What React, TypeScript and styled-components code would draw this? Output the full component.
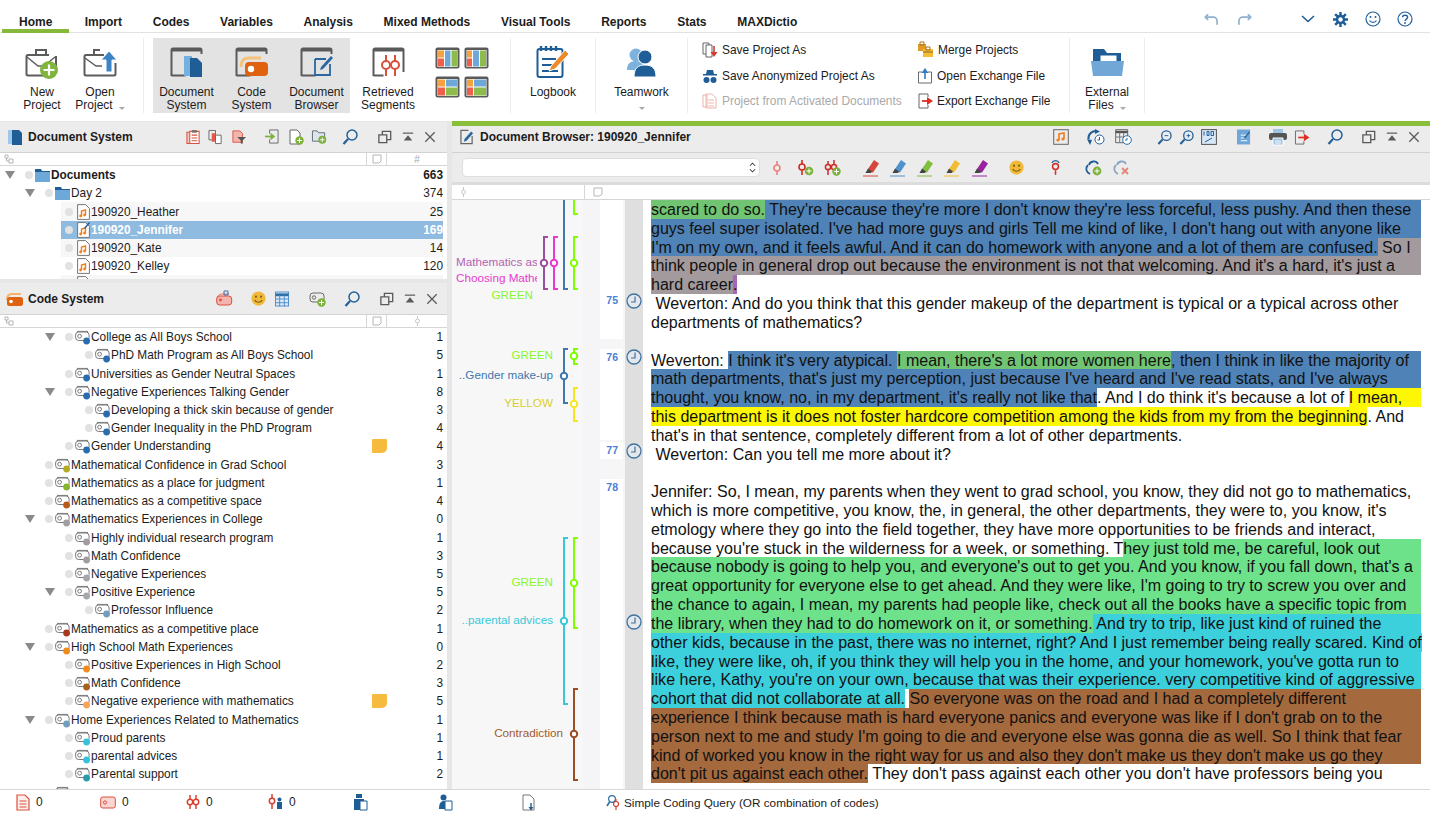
import React from 'react';
import styled, { createGlobalStyle } from 'styled-components';

const UI_FONT = `"Liberation Sans", Arial, sans-serif`;

const Global = createGlobalStyle`
  html, body { margin: 0; padding: 0; background: #fff; }
  #root { width: 1430px; height: 814px; overflow: hidden; }
`;

const Page = styled.div`
  width: 1430px; height: 814px; display: flex; flex-direction: column; overflow: hidden;
  background: #fff; color: #1c1c1c; font-family: ${UI_FONT}; font-size: 12px;
`;

/* ---------- tabs ---------- */
const TabBar = styled.div`
  height: 33px; flex: none; display: flex; align-items: stretch; padding-left: 2px;
  border-bottom: 1px solid #e2e2e2; box-sizing: border-box;
`;
const Tab = styled.div<{ $active?: boolean }>`
  padding: 15px 15.35px 0; box-sizing: border-box; height: 33px; font-weight: 700; font-size: 12px; letter-spacing: 0;
  border-bottom: 4px solid ${p => (p.$active ? '#86b93a' : 'transparent')};
  &:first-child { padding-left: 17px; padding-right: 17px; }
`;
const TabRight = styled.div`
  margin-left: auto; display: flex; align-items: center; padding: 6px 17px 0 0;
`;

/* ---------- ribbon ---------- */
const Ribbon = styled.div`height: 88px; flex: none; display: flex; align-items: flex-start; background: #fff;`;
const RibbonButton = styled.div<{ $w: number; $top?: number; $ih?: number; $ml?: number }>`
  width: ${p => p.$w}px; flex: none; box-sizing: border-box; padding-top: ${p => p.$top ?? 14}px; margin-left: ${p => p.$ml ?? 0}px;
  display: flex; flex-direction: column; align-items: center; text-align: center; line-height: 13px; font-size: 12px;
  & > div:first-child { height: ${p => p.$ih ?? 39}px; }
`;
const RibbonIcon = styled.div`display: flex; align-items: flex-start; justify-content: center;`;
const Separator = styled.div<{ $ml?: number }>`
  width: 1px; height: 75px; margin: 5px 0 0 ${p => p.$ml ?? 0}px; flex: none; background: #ececec;
`;
const ActiveGroup = styled.div`
  display: flex; flex: none; width: 197px; height: 75px; margin: 5px 0 0 9px; padding-left: 1px; box-sizing: border-box; background: #e3e3e3;
`;
const LayoutGrid = styled.div`
  display: grid; flex: none; grid-template-columns: 25px 25px; grid-auto-rows: 22px; gap: 7px 4px; margin: 14px 0 0 9px;
`;
const ListColumn = styled.div<{ $w: number; $ml?: number }>`
  width: ${p => p.$w}px; margin: 4.5px 0 0 ${p => p.$ml ?? 0}px; flex: none; display: flex; flex-direction: column;
`;
const ListItem = styled.div<{ $off?: boolean }>`
  height: 25.5px; display: flex; align-items: center; gap: 4px; font-size: 11.95px; color: ${p => (p.$off ? '#a9a9a9' : '#1c1c1c')}; white-space: nowrap;
`;
const Caret = styled.span`
  display: inline-block; width: 0; height: 0; margin-left: 6px; vertical-align: -1px;
  border-left: 3px solid transparent; border-right: 3px solid transparent; border-top: 3px solid #aaa;
`;
const CaretLine = styled.div`height: 12px; line-height: 12px; margin-left: -6px;`;

/* ---------- workspace ---------- */
const Workspace = styled.div`flex: 1; min-height: 0; display: flex; background: #e6e6e6;`;
const LeftColumn = styled.div`width: 447px; flex: none; display: flex; flex-direction: column; padding-top: 1px; box-sizing: border-box;`;
const RightColumn = styled.div`
  margin-left: 5px; flex: 1; min-width: 0; display: flex; flex-direction: column; background: #fff; border-top: 5px solid #8abf3a;
`;
const Panel = styled.div<{ $h?: number }>`
  ${p => (p.$h ? `height:${p.$h}px; flex:none; margin-bottom: 4px;` : 'flex:1; min-height:0;')}
  display: flex; flex-direction: column; background: #fff; overflow: hidden;
`;
const PanelHeader = styled.div<{ $h: number; $pb?: number }>`
  height: ${p => p.$h}px; padding-bottom: ${p => p.$pb ?? 0}px; flex: none; display: flex; align-items: center; background: #ececec; box-sizing: border-box;
  border-bottom: 1px solid #d2d2d2;
`;
const PanelTitle = styled.div<{ $ml: number; $w: number }>`
  margin-left: ${p => p.$ml}px; width: ${p => p.$w}px; flex: none; font-weight: 700; font-size: 12px; letter-spacing: 0; white-space: nowrap;
`;
const SubHeader = styled.div`
  height: 13px; flex: none; display: flex; align-items: center; box-sizing: border-box; border-bottom: 1px solid #d6d6d6; background: #fff;
`;
const SubCell = styled.div<{ $w: number; $line?: boolean }>`
  width: ${p => p.$w}px; flex: none; height: 100%; display: flex; align-items: center; justify-content: center;
  border-left: ${p => (p.$line ? '1px solid #d6d6d6' : 'none')}; box-sizing: border-box; color: #aaa; font-size: 10px;
`;
const TreeList = styled.div`flex: 1; min-height: 0; overflow: hidden;`;
const Row = styled.div`height: 18.22px; display: flex; align-items: center; font-size: 11.85px;`;
const Indent = styled.div<{ $lvl: number }>`
  width: ${p => 21 + p.$lvl * 20}px; padding-left: ${p => 5 + p.$lvl * 20}px; box-sizing: border-box; flex: none; display: flex; align-items: center;
`;
const Arrow = styled.span`
  width: 0; height: 0; border-left: 5px solid transparent; border-right: 5px solid transparent; border-top: 8px solid #8a8a8a;
`;
const RowBody = styled.div<{ $sel?: boolean; $stripe?: boolean }>`
  flex: 1; min-width: 0; height: 100%; margin-right: 4px; padding: 0 0 0 4px; display: flex; align-items: center; box-sizing: border-box;
  background: ${p => (p.$sel ? '#8fbbe0' : p.$stripe ? '#f7f7f7' : 'transparent')}; color: ${p => (p.$sel ? '#fff' : '#1c1c1c')};
  font-weight: ${p => (p.$sel ? 700 : 400)};
`;
const Dot = styled.span`width: 8px; height: 8px; border-radius: 50%; background: #e2e2e2; flex: none;`;
const RowLabel = styled.div<{ $bold?: boolean }>`
  flex: 1; min-width: 0; margin-left: 1px; white-space: nowrap; overflow: hidden; font-weight: ${p => (p.$bold ? 700 : 'inherit')};
`;
const NoteCell = styled.div`width: 15px; flex: none; display: flex; align-items: center;`;
const StickyNote = styled.span`
  width: 15px; height: 14px; border-radius: 1px 1px 5px 1px; background: #f6bb3e;
`;
const Count = styled.div<{ $bold?: boolean }>`
  width: 56px; flex: none; text-align: right; font-weight: ${p => (p.$bold ? 700 : 'inherit')};
`;

/* ---------- browser ---------- */
const BrowserTools = styled.div`
  height: 32px; flex: none; display: flex; align-items: center; background: #ececec; border-bottom: 3px solid #dcdcdc; box-sizing: border-box;
`;
const ComboBox = styled.div`
  width: 298px; height: 19px; margin-left: 10px; flex: none; background: #fff; border-radius: 4px; border: 1px solid #dedede; box-sizing: border-box;
  display: flex; align-items: center; justify-content: flex-end; padding-right: 3px;
`;
const StripeHeader = styled.div`
  height: 15px; flex: none; display: flex; box-sizing: border-box; border-bottom: 1px solid #d6d6d6; background: #fff;
`;
const StripeHeadCell = styled.div<{ $w: number; $line?: boolean }>`
  width: ${p => p.$w}px; flex: none; display: flex; align-items: center; box-sizing: border-box; padding-left: 8px;
  border-left: ${p => (p.$line ? '1px solid #d6d6d6' : 'none')};
`;
const BrowserBody = styled.div`flex: 1; min-height: 0; display: flex; overflow: hidden;`;
const StripeColumn = styled.div`width: 148px; flex: none; background: linear-gradient(90deg,#f7f7f7 0,#f7f7f7 131px,#f5f5f8 131px);`;
const ParaColumn = styled.div`width: 25px; flex: none; background: #f6f6f6; padding-right: 2px; box-sizing: border-box;`;
const ParaCell = styled.div<{ $h: number; $on?: boolean }>`
  height: ${p => p.$h}px; background: ${p => (p.$on ? '#fff' : 'transparent')}; text-align: right; padding: 1px 5px 0 0; box-sizing: border-box;
  color: #4a80d4; font-size: 10.5px; font-weight: 700; line-height: 14px;
`;
const TimeColumn = styled.div`width: 18px; flex: none; background: #dfdfdf; display: flex; flex-direction: column; align-items: center;`;
const ClockSlot = styled.div<{ $gap: number }>`margin-top: ${p => p.$gap}px; height: 16px;`;
const TextColumn = styled.div`flex: 1; min-width: 0; padding: 0 0 0 8px; overflow: hidden;`;
const TextLine = styled.div`
  width: 770px; height: 18.82px; display: flex; white-space: pre; font-size: 16.05px; line-height: 18.82px; letter-spacing: 0; color: #111;
`;
const Seg = styled.span<{ $bg?: string; $fill?: boolean }>`
  background: ${p => p.$bg ?? 'transparent'}; ${p => (p.$fill ? 'flex: 1;' : 'flex: none;')}
`;

/* ---------- status ---------- */
const StatusBar = styled.div`
  height: 25px; flex: none; display: flex; align-items: center; background: #fff; border-top: 1px solid #d8d8d8; box-sizing: border-box; font-size: 12px;
`;
const StatusCount = styled.span<{ $w: number }>`width: ${p => p.$w}px; flex: none; padding-left: 6px; box-sizing: border-box;`;
const QueryLabel = styled.span`margin-left: 4px; font-size: 11.75px; white-space: nowrap;`;

/* ---------- drawings ---------- */
const Glyph = styled.svg<{ $ml?: number; $mt?: number }>`
  display: block; flex: none; margin-left: ${p => p.$ml ?? 0}px; margin-top: ${p => p.$mt ?? 0}px; overflow: visible;
`;
type IP = { ml?: number; mt?: number; w?: number; h?: number };
const mk = (vb: string, dw: number, dh: number, body: React.ReactNode) => ({ ml, mt, w = dw, h = dh }: IP) => (
  <Glyph $ml={ml} $mt={mt} width={w} height={h} viewBox={vb} fill="none">{body}</Glyph>
);

const briefcase = (
  <g stroke="#5c5c5c" strokeWidth="2">
    <path d="M11 8V3h10v5" />
    <path d="M24 8H3a1.5 1.5 0 0 0-1.5 1.5V27a1.5 1.5 0 0 0 1.5 1.5h16M31 20V9" />
    <path d="M2 10l11 9h6l11-9" strokeWidth="1.4" />
  </g>
);
const NewProject = mk('0 0 34 32', 34, 32, <>
  {briefcase}
  <circle cx="24" cy="23" r="9" fill="#7fb53c" />
  <path d="M24 17.5v11M18.5 23h11" stroke="#fff" strokeWidth="2.2" />
</>);
const OpenProject = mk('0 0 34 32', 34, 32, <>
  <path d="M11 8V3h6M21 8H3a1.5 1.5 0 0 0-1.5 1.5V27a1.5 1.5 0 0 0 1.5 1.5h28a1.5 1.5 0 0 0 1.5-1.5V16" stroke="#5c5c5c" strokeWidth="2" />
  <path d="M2 11l11 8h6" stroke="#5c5c5c" strokeWidth="1.4" />
  <path d="M26 4l8 9h-5v12h-6V13h-5z" fill="#3d84c4" stroke="#fff" />
</>);
const frame = <path d="M1.5 29V3a1.5 1.5 0 0 1 1.5-1.5h27a1.5 1.5 0 0 1 1.5 1.5v4M1.5 28.5h14M1.5 3.5h30" stroke="#5a5a5a" strokeWidth="2" />;
const DocSystemBig = mk('0 0 33 30', 33, 30, <>
  {frame}
  <path d="M14 9h8v20h-8z" fill="#76b0de" />
  <path d="M20 11h7l5 5v14H20z" fill="#1f5d96" />
</>);
const CodeSystemBig = mk('0 0 33 30', 33, 30, <>
  {frame}
  <path d="M6 20c0-7 3-9 7-9h13" stroke="#f5c27b" strokeWidth="3" />
  <rect x="10" y="15" width="23" height="14" rx="4" fill="#df6211" />
  <circle cx="16" cy="22" r="3.2" fill="#fff" />
</>);
const DocBrowserBig = mk('0 0 33 30', 33, 30, <>
  {frame}
  <path d="M15 12h11M15 12v16h15V17" stroke="#2a669f" strokeWidth="1.8" />
  <path d="M21 20l10-11 2 2-10 11-3 1z" fill="#2a669f" />
</>);
const RetrievedBig = mk('0 0 33 30', 33, 30, <>
  <path d="M1.5 29V3a1.5 1.5 0 0 1 1.5-1.5h27a1.5 1.5 0 0 1 1.5 1.5v22M1.5 28.5h10M1.5 3.5h30" stroke="#5a5a5a" strokeWidth="2" />
  <g stroke="#d94f3d" strokeWidth="2">
    <circle cx="14" cy="18" r="4" fill="#fff" />
    <circle cx="23" cy="18" r="4" fill="#fff" />
    <path d="M14 8v6M14 22v7M23 8v6M23 22v7" />
  </g>
</>);
const layoutBase = (ch: React.ReactNode) => mk('0 0 25 22', 25, 22, <>
  <rect x=".5" y=".5" width="24" height="21" rx="2" fill="#5a5a5a" />
  <rect x="2.5" y="3" width="20" height="17" fill="#fff" />
  {ch}
</>);
const Layout1 = layoutBase(<><rect x="3" y="3.5" width="6" height="7" fill="#f4a13f" /><rect x="3" y="11.5" width="6" height="8" fill="#ef5f4c" /><rect x="10" y="3.5" width="5.5" height="16" fill="#6ea8d8" /><rect x="16.5" y="3.5" width="5.5" height="16" fill="#8fbb4c" /></>);
const Layout2 = layoutBase(<><rect x="3" y="3.5" width="5" height="7" fill="#f4a13f" /><rect x="3" y="11.5" width="5" height="8" fill="#ef5f4c" /><rect x="9" y="3.5" width="6" height="16" fill="#6ea8d8" /><rect x="16" y="3.5" width="6" height="16" fill="#8fbb4c" /></>);
const Layout3 = layoutBase(<><rect x="3" y="3.5" width="7" height="7" fill="#f4a13f" /><rect x="3" y="11.5" width="7" height="8" fill="#ef5f4c" /><rect x="11" y="3.5" width="11" height="7" fill="#6ea8d8" /><rect x="11" y="11.5" width="11" height="8" fill="#8fbb4c" /></>);
const Layout4 = layoutBase(<><rect x="3" y="3.5" width="6" height="7" fill="#f4a13f" /><rect x="3" y="11.5" width="6" height="8" fill="#ef5f4c" /><rect x="10" y="3.5" width="12" height="7" fill="#6ea8d8" /><rect x="10" y="11.5" width="12" height="8" fill="#8fbb4c" /></>);
const Logbook = mk('0 0 34 34', 34, 34, <>
  <rect x="1.5" y="4" width="25" height="28" rx="2" stroke="#1f5d96" strokeWidth="2" fill="#fff" />
  <path d="M5 1v5M10 1v5M15 1v5M20 1v5" stroke="#1f5d96" strokeWidth="2.4" />
  <path d="M6 14h14M6 20h12M6 26h16" stroke="#1f5d96" strokeWidth="2" />
  <path d="M15 21l14-16 4 4-14 15-6 2z" fill="#ef8a2a" stroke="#fff" strokeWidth="1" />
</>);
const Teamwork = mk('0 0 30 31', 30, 31, <>
  <circle cx="9" cy="8" r="6.5" fill="#7db2de" />
  <path d="M0 23c0-7 4-9 9-9s8 3 8 9z" fill="#7db2de" />
  <circle cx="18" cy="10" r="7" fill="#1f5d96" stroke="#fff" />
  <path d="M7 30c0-9 4-12 11-12s11 3 11 12z" fill="#1f5d96" stroke="#fff" />
</>);
const ExternalFiles = mk('0 0 33 30', 33, 30, <>
  <path d="M2 2h11l3 4h14v10H2z" fill="#1f5d96" />
  <path d="M9 8h17v8H9z" fill="#fff" stroke="#1f5d96" />
  <path d="M0 14h33l-2 15H2z" fill="#70a7d6" />
</>);
const SaveAs = mk('0 0 16 16', 16, 16, <>
  <path d="M1 1h6v11H1z" stroke="#666" /><path d="M4 3h6v12H4z" stroke="#666" fill="#fff" />
  <path d="M12 4v7" stroke="#d73a2c" strokeWidth="1.6" /><path d="M8.5 10h7L12 15z" fill="#d73a2c" />
</>);
const Anonym = mk('0 0 16 16', 16, 16, <>
  <path d="M4 6l1-4h6l1 4h3v1.5H1V6z" fill="#1f5d96" />
  <circle cx="4.5" cy="12" r="3" fill="#1f5d96" /><circle cx="11.5" cy="12" r="3" fill="#1f5d96" />
</>);
const FromDocs = mk('0 0 16 16', 16, 16, <g stroke="#eeb4ab">
  <path d="M1 2h4v12H1zM4 1h6l4 4v10H4z" fill="#fff" /><path d="M6 7h6M6 10h6M6 13h6" />
</g>);
const Merge = mk('0 0 17 16', 17, 16, <>
  <path d="M1 2h8v7H1z" fill="#e29a27" /><path d="M3 0h4v3H3z" stroke="#a8741c" />
  <path d="M6 7h10v8H6z" fill="#f5bd36" /><path d="M9 5h4v3H9z" stroke="#a8741c" /><path d="M6 10h10" stroke="#8a6a1c" />
</>);
const OpenExch = mk('0 0 16 16', 16, 16, <>
  <path d="M5 4H1.5v11h13V4H11" stroke="#6b6b6b" />
  <path d="M8 11V3" stroke="#2f7ac0" strokeWidth="1.6" /><path d="M4.5 5L8 0l3.5 5z" fill="#2f7ac0" />
</>);
const ExportExch = mk('0 0 16 16', 16, 16, <>
  <path d="M11 4V1H2v14h9v-3" stroke="#666" />
  <path d="M5 8h6" stroke="#df2f22" strokeWidth="1.8" /><path d="M10 4l6 4-6 4z" fill="#df2f22" />
</>);
const Search = mk('0 0 16 16', 16, 16, <>
  <circle cx="10" cy="6" r="5" stroke="#23609a" strokeWidth="1.5" />
  <path d="M6 10L1.5 15" stroke="#23609a" strokeWidth="2.2" />
</>);
const Windows = mk('0 0 16 16', 14, 14, <path d="M1 5.5h9v9H1zM5 5V1.5h9.5V11H10.5" stroke="#5a5a5a" strokeWidth="1.5" />);
const Collapse = mk('0 0 14 14', 12, 12, <><path d="M1 2.5h12" stroke="#5a5a5a" strokeWidth="1.4" /><path d="M2 11l5-6 5 6z" fill="#5a5a5a" /></>);
const Close = mk('0 0 14 14', 12, 12, <path d="M1.5 1.5l11 11M12.5 1.5l-11 11" stroke="#5a5a5a" strokeWidth="1.5" />);
const DocSmall = mk('0 0 16 16', 16, 16, <><path d="M1 1h7v14H1z" fill="#9fc7ea" /><path d="M5 1h7l3 3v12H5z" fill="#1f5d96" /></>);
const CodeSmall = mk('0 0 17 14', 17, 14, <>
  <path d="M1 8c0-4 2-6 5-6h9" stroke="#f5b26b" strokeWidth="2" />
  <rect x="1" y="5" width="16" height="9" rx="2.5" fill="#df6211" /><circle cx="5" cy="9.5" r="1.8" fill="#fff" />
</>);
const PasteRed = mk('0 0 16 16', 15, 16, <g stroke="#d9503f" strokeWidth="1.1">
  <path d="M1 3h4v12H1z" fill="#f7c8c0" /><path d="M4 2h10v13H4z" fill="#fff" /><path d="M6 6h6M6 9h6M6 12h6" /><path d="M7 1h4v2H7z" stroke="#777" />
</g>);
const CopyDocs = mk('0 0 16 16', 15, 16, <>
  <path d="M1 1h7v10H1z" stroke="#666" /><path d="M4 4h4v9H4z" fill="#e2584a" />
  <path d="M8 6h6v9H8z" fill="#fff" stroke="#666" />
</>);
const FilterDoc = mk('0 0 16 16', 14, 16, <>
  <path d="M1 1h8l3 3v10H1z" fill="#f2b6ae" stroke="#d9503f" /><path d="M6 8h10l-4 4v4l-2-1v-3z" fill="#555" />
</>);
const ImportGreen = mk('0 0 16 16', 15, 15, <>
  <path d="M6 1h9v14H6V11M6 5V1" stroke="#666" /><path d="M1 8h7" stroke="#7cb13b" strokeWidth="1.8" /><path d="M7 4l5 4-5 4z" fill="#7cb13b" />
</>);
const NewDoc = mk('0 0 16 16', 16, 16, <>
  <path d="M2 1h7l3 3v11H2z" stroke="#666" fill="#fff" /><circle cx="11.5" cy="11.5" r="4.2" fill="#7cb13b" />
  <path d="M11.5 9v5M9 11.5h5" stroke="#fff" />
</>);
const NewFolder = mk('0 0 16 16', 16, 15, <>
  <path d="M1 2h5l1.5 2H14v9H1z" stroke="#5c6b78" fill="#dfe5ea" /><circle cx="11.5" cy="11.5" r="4.2" fill="#7cb13b" />
  <path d="M11.5 9v5M9 11.5h5" stroke="#fff" />
</>);
const TreeMini = mk('0 0 10 10', 10, 10, <path d="M1 1h3v3H1zM5 5h4v4H5zM2.5 4v3H5" stroke="#b5b5b5" />);
const NoteMini = mk('0 0 10 10', 10, 10, <path d="M1 1h8v6L7 9H1z" stroke="#b5b5b5" />);
const CodeMini = mk('0 0 8 12', 7, 10, <><circle cx="4" cy="6" r="2.4" stroke="#bdbdbd" /><path d="M4 0v3.5M4 8.5V12" stroke="#bdbdbd" /></>);
const CodeSys2 = mk('0 0 17 15', 17, 15, <>
  <path d="M1 8c0-3 2-5 5-5h7" stroke="#e9706a" /><rect x=".7" y="5" width="15" height="9" rx="3" fill="#f3b4ae" stroke="#d9503f" />
  <circle cx="4.5" cy="9" r="1.4" fill="#d9503f" /><path d="M8 0h4v4H8z" stroke="#3b73aa" />
</>);
const Smiley = mk('0 0 16 16', 15, 15, <>
  <circle cx="8" cy="8" r="7.6" fill="#f0b93a" /><circle cx="5.3" cy="6" r="1.1" fill="#7d5a10" /><circle cx="10.7" cy="6" r="1.1" fill="#7d5a10" />
  <path d="M4 9.5c1.5 3.4 6.5 3.4 8 0" stroke="#7d5a10" strokeWidth="1.2" />
</>);
const TableBlue = mk('0 0 15 16', 14, 16, <>
  <rect x=".5" y=".5" width="14" height="15" fill="#d9e9f7" stroke="#4d8cc6" />
  <path d="M.5 3.5h14" stroke="#2e6ea8" strokeWidth="3" /><path d="M5 4v12M10 4v12M1 8h13M1 12h13" stroke="#4d8cc6" />
</>);
const CodePlus = mk('0 0 17 16', 17, 16, <>
  <rect x="1" y="2" width="14" height="9" rx="3" stroke="#6b6b6b" /><circle cx="5" cy="6.5" r="1.7" stroke="#6b6b6b" />
  <circle cx="12.5" cy="11.5" r="4.2" fill="#7cb13b" /><path d="M12.5 9v5M10 11.5h5" stroke="#fff" />
</>);
const Music = mk('0 0 16 16', 16, 16, <>
  <rect x=".7" y=".7" width="14.6" height="14.6" stroke="#666" /><path d="M6 11V5l5-1v6" stroke="#ef7e1c" strokeWidth="1.6" />
  <circle cx="5" cy="11" r="1.6" fill="#ef7e1c" /><circle cx="10" cy="10" r="1.6" fill="#ef7e1c" />
</>);
const Sync = mk('0 0 18 16', 18, 16, <>
  <path d="M1.5 10C1 5 5 1.5 10 2" stroke="#1f5d96" strokeWidth="2" />
  <path d="M8 0l5 2.5L8 5zM0 10l5 1-2 5z" fill="#1f5d96" />
  <circle cx="12.5" cy="10.5" r="4.5" fill="#fff" stroke="#1f5d96" /><path d="M12.5 8v3h-2" stroke="#1f5d96" />
</>);
const TableClock = mk('0 0 17 16', 17, 16, <>
  <path d="M.7.7h12v13H.7z" stroke="#666" fill="#eee" /><path d="M.7 3h12" stroke="#555" strokeWidth="2.4" /><path d="M4.7 4v9M8.7 4v9M1 8h11" stroke="#777" />
  <circle cx="12" cy="11" r="4.3" fill="#fff" stroke="#2a6ea8" /><path d="M12 8.8V11h-2" stroke="#2a6ea8" />
</>);
const ZoomOut = mk('0 0 16 16', 15, 15, <>
  <circle cx="10" cy="6" r="5" stroke="#23609a" strokeWidth="1.4" /><path d="M6 10l-4.5 5" stroke="#23609a" strokeWidth="2.2" /><path d="M8 6h4" stroke="#23609a" />
</>);
const ZoomIn = mk('0 0 16 16', 15, 15, <>
  <circle cx="10" cy="6" r="5" stroke="#23609a" strokeWidth="1.4" /><path d="M6 10l-4.5 5" stroke="#23609a" strokeWidth="2.2" /><path d="M8 6h4M10 4v4" stroke="#23609a" />
</>);
const Hundred = mk('0 0 16 16', 16, 16, <>
  <rect x=".6" y=".6" width="14.8" height="14.8" fill="#d7e7f5" stroke="#555" />
  <path d="M3 2.5v4M6 2.5h2v4H6zM10 2.5h2.5v4H10zM4 13l7-4" stroke="#23609a" />
</>);
const PencilBlue = mk('0 0 15 16', 14, 16, <>
  <rect width="14" height="16" fill="#6ea6d8" /><path d="M4 6h7M4 9h5M4 12h7" stroke="#fff" /><path d="M8 8l5-6 1 1-5 6-2 1z" fill="#1f5d96" />
</>);
const Printer = mk('0 0 18 16', 18, 16, <>
  <path d="M4 0h10v5H4z" fill="#9fc3e3" /><rect y="4" width="18" height="7" rx="2" fill="#555" />
  <path d="M4 9h10v7H4z" fill="#9fc3e3" stroke="#fff" /><path d="M6 12h6M6 14h6" stroke="#fff" />
</>);
const ExportDoc = mk('0 0 16 16', 16, 15, <>
  <path d="M10 4V1H1v14h9v-3" stroke="#666" /><path d="M4 8h7" stroke="#df2f22" strokeWidth="1.8" /><path d="M10 4l6 4-6 4z" fill="#df2f22" />
</>);
const Updown = mk('0 0 8 14', 7, 13, <path d="M1 5l3-3 3 3M1 9l3 3 3-3" stroke="#444" strokeWidth="1.2" />);
const CodeOne = (c: string) => mk('0 0 10 16', 10, 16, <>
  <circle cx="5" cy="8" r="3" stroke={c} strokeWidth="1.6" /><path d="M5 1v4M5 11v4" stroke={c} strokeWidth="1.6" />
</>);
const CodePink = CodeOne('#e9827a');
const CodeRedPlus = mk('0 0 17 16', 17, 16, <>
  <circle cx="5" cy="7" r="3" stroke="#cf2b22" strokeWidth="1.6" /><path d="M5 0v4M5 10v5" stroke="#cf2b22" strokeWidth="1.6" />
  <circle cx="12" cy="11" r="4.3" fill="#7cb13b" /><path d="M12 8.6v5M9.6 11h5" stroke="#fff" />
</>);
const CodeDblPlus = mk('0 0 17 16', 17, 16, <>
  <circle cx="4" cy="7" r="2.6" stroke="#cf2b22" strokeWidth="1.5" /><circle cx="10" cy="7" r="2.6" stroke="#cf2b22" strokeWidth="1.5" />
  <path d="M4 1v3M4 10v5M10 0v4" stroke="#cf2b22" strokeWidth="1.5" />
  <circle cx="12.5" cy="11.5" r="4.2" fill="#7cb13b" /><path d="M12.5 9v5M10 11.5h5" stroke="#fff" />
</>);
const marker = (c: string) => mk('0 0 16 18', 16, 18, <>
  <path d="M5 10l6-9 5 3.5-6 9H6z" fill={c} /><path d="M2.5 14l2.5-4.5 4 3-1.5 1.5H3z" fill="#444" />
  <path d="M0 17h15" stroke={c} strokeWidth="1.4" opacity=".7" />
</>);
const MarkRed = marker('#d8463a');
const MarkBlue = marker('#4f92cc');
const MarkGreen = marker('#83bf3f');
const MarkYellow = marker('#f3bb34');
const MarkPurple = marker('#9a22a0');
const CodeCycle = mk('0 0 12 18', 11, 17, <>
  <circle cx="6" cy="8" r="3.2" stroke="#d3312a" strokeWidth="1.7" /><path d="M6 12v5" stroke="#d3312a" strokeWidth="1.7" />
  <path d="M2 4a4.5 4.5 0 0 1 8 0" stroke="#23609a" strokeWidth="1.4" />
</>);
const LinkPlus = mk('0 0 17 16', 17, 16, <>
  <path d="M5 14C1 12 0 8 3 5 M4 5c1-4 7-5 9-1" stroke="#1f5d96" strokeWidth="1.8" />
  <circle cx="12" cy="11" r="4.4" fill="#7cb13b" /><path d="M12 8.5v5M9.5 11h5" stroke="#fff" />
</>);
const LinkX = mk('0 0 17 16', 17, 16, <>
  <path d="M5 14C1 12 0 8 3 5 M4 5c1-4 7-5 9-1" stroke="#8aa5bd" strokeWidth="1.8" />
  <path d="M9 8l6 6M15 8l-6 6" stroke="#e2857c" strokeWidth="1.8" />
</>);
const Clock = mk('0 0 16 16', 16, 16, <>
  <circle cx="8" cy="8" r="7" stroke="#3f729f" strokeWidth="1.3" fill="#e4e8ec" /><path d="M9 3.5V9H5" stroke="#3f729f" strokeWidth="1.2" />
</>);
const BrowserTitleIcon = mk('0 0 15 16', 14, 16, <>
  <path d="M9 1H1v14h12V7" stroke="#666" strokeWidth="1.3" /><path d="M5 10l7-8 2 2-7 8-3 1z" fill="#2a669f" />
</>);
const UndoIcon = mk('0 0 16 14', 15, 14, <><path d="M1 5h9a4 4 0 0 1 4 4v4" stroke="#8fb0cf" strokeWidth="1.8" /><path d="M1 5l3.5-3M1 5l3.5 3" stroke="#8fb0cf" strokeWidth="1.8" /></>);
const RedoIcon = mk('0 0 16 14', 15, 14, <><path d="M15 5H6a4 4 0 0 0-4 4v4" stroke="#8fb0cf" strokeWidth="1.8" /><path d="M15 5l-3.5-3M15 5l-3.5 3" stroke="#8fb0cf" strokeWidth="1.8" /></>);
const ChevronIcon = mk('0 0 14 8', 14, 8, <path d="M1 1l6 5.5L13 1" stroke="#1f5d96" strokeWidth="1.6" />);
const GearIcon = mk('0 0 16 16', 15, 15, <>
  <g stroke="#1f5d96" strokeWidth="2.6"><path d="M8 0v16M0 8h16M2.3 2.3l11.4 11.4M13.7 2.3L2.3 13.7" /></g>
  <circle cx="8" cy="8" r="5" fill="#1f5d96" /><circle cx="8" cy="8" r="2.4" fill="#fff" />
</>);
const FaceIcon = mk('0 0 16 16', 16, 16, <>
  <circle cx="8" cy="8" r="7" stroke="#23609a" strokeWidth="1.2" /><circle cx="5.5" cy="6" r="1" fill="#23609a" /><circle cx="10.5" cy="6" r="1" fill="#23609a" />
  <path d="M4.5 9.5c1.5 2.5 5.5 2.5 7 0" stroke="#23609a" strokeWidth="1.2" />
</>);
const HelpIcon = mk('0 0 16 16', 16, 16, <>
  <circle cx="8" cy="8" r="7" stroke="#23609a" strokeWidth="1.2" />
  <path d="M5.5 6.2C5.7 3.6 10.6 3.6 10.6 6.3c0 1.8-2.5 1.8-2.5 3.7" stroke="#23609a" strokeWidth="1.4" /><circle cx="8" cy="12" r=".9" fill="#23609a" />
</>);
const StDoc = mk('0 0 14 17', 14, 17, <><path d="M1 1h8l4 4v11H1z" stroke="#d9503f" strokeWidth="1.2" fill="#fdeeec" /><path d="M3.5 7h7M3.5 10h7M3.5 13h7" stroke="#d9503f" /></>);
const StTag = mk('0 0 16 13', 16, 13, <><rect x=".7" y="1" width="14.6" height="11" rx="2" stroke="#d9503f" fill="#f9d6d1" /><circle cx="5" cy="6.5" r="1.6" stroke="#d9503f" /></>);
const StCodes = mk('0 0 14 16', 14, 16, <>
  <circle cx="4" cy="8" r="2.7" stroke="#d9402f" strokeWidth="1.5" /><circle cx="10" cy="8" r="2.7" stroke="#d9402f" strokeWidth="1.5" />
  <path d="M4 1v4M4 11v4M10 1v4M10 11v4" stroke="#d9402f" strokeWidth="1.5" />
</>);
const StCodeDoc = mk('0 0 15 16', 15, 16, <>
  <circle cx="4" cy="7" r="2.7" stroke="#d9402f" strokeWidth="1.5" /><path d="M4 0v4M4 10v5" stroke="#d9402f" strokeWidth="1.5" />
  <path d="M9 8h5v7H9z" fill="#1f5d96" /><circle cx="11.5" cy="5.5" r="2" fill="#1f5d96" />
</>);
const StPersonDoc = mk('0 0 15 17', 15, 17, <>
  <path d="M3 0h6v4H3zM1 5h10v11H1z" fill="#1f5d96" /><path d="M7 7h7v9H7z" fill="#fff" stroke="#1f5d96" />
</>);
const StPersonDoc2 = mk('0 0 15 17', 15, 17, <>
  <circle cx="5.5" cy="3.5" r="3" fill="#1f5d96" /><path d="M1 15c0-6 2-8 5-8s4 2 4 8z" fill="#1f5d96" /><path d="M7 7h7v9H7z" fill="#fff" stroke="#1f5d96" />
</>);
const StDocDown = mk('0 0 14 17', 14, 17, <>
  <path d="M1 1h7l4 4v11H1z" stroke="#777" /><path d="M9 9v6" stroke="#1f5d96" strokeWidth="1.4" /><path d="M6.5 13L9 16.5 11.5 13z" fill="#1f5d96" />
</>);
const StQuery = mk('0 0 14 17', 14, 17, <>
  <circle cx="6" cy="5" r="3.4" stroke="#2a6ea8" strokeWidth="1.2" /><path d="M3.5 8L1 12" stroke="#2a6ea8" strokeWidth="1.6" />
  <circle cx="10" cy="10" r="2.5" stroke="#d9402f" strokeWidth="1.2" /><path d="M10 5v2.5M10 12.5V16" stroke="#d9402f" strokeWidth="1.2" />
</>);

const FolderTree = mk('0 0 15 14', 15, 14, <><path d="M0 1h6l1 2h8v2H0z" fill="#1f5d96" /><path d="M0 4h15v10H0z" fill="#6ea8d8" /></>);
const MediaDoc = ({ edit }: { edit?: boolean }) => (
  <Glyph $ml={4} width="13" height="16" viewBox="0 0 13 16" fill="none">
    <path d="M.6.6h8l3.8 3.8v11H.6z" fill="#fff" stroke="#777" />
    <path d="M4.5 12V7l4-1v5" stroke="#ef7e1c" strokeWidth="1.4" />
    <circle cx="3.6" cy="12" r="1.4" fill="#ef7e1c" /><circle cx="7.6" cy="11" r="1.4" fill="#ef7e1c" />
    {edit && <path d="M7 6l5-6 1 1-5 6z" fill="#1f5d96" />}
  </Glyph>
);
const CodeTag = ({ c }: { c: string }) => (
  <Glyph $ml={2} width="15" height="16" viewBox="0 0 15 16" fill="none">
    <path d="M2 2.5h11" stroke="#888" strokeWidth="1.2" />
    <rect x=".6" y="3" width="13.5" height="8.5" rx="3" fill="#fff" stroke="#7a7a7a" />
    <circle cx="4.6" cy="7.2" r="1.9" stroke="#7a7a7a" />
    <circle cx="11.6" cy="12" r="3.4" fill={c} />
  </Glyph>
);

/* ---------- coding stripes ---------- */
const Stripe = ({ x, y1, y2, c, dot }: { x: number; y1: number; y2: number; c: string; dot?: number }) => (
  <>
    <path d={`M${x + 4} ${y1}H${x}V${y2}H${x + 4}`} stroke={c} strokeWidth="2" fill="none" />
    {dot !== undefined && <circle cx={x} cy={dot} r="3.2" fill="#fff" stroke={c} strokeWidth="2" />}
  </>
);
const StripeCanvas = styled.svg`display: block; font-family: ${UI_FONT}; font-size: 11.7px;`;
const Stripes = () => (
  <StripeCanvas width="148" height="589" viewBox="452 200 148 589">
    <defs><clipPath id="lbl"><rect x="452" y="200" width="85" height="200" /></clipPath></defs>
    <Stripe x={564} y1={190} y2={289} c="#3f78ad" />
    <Stripe x={574} y1={190} y2={214} c="#7fff00" />
    <Stripe x={544} y1={237} y2={289} c="#9a4f9a" dot={263} />
    <Stripe x={554} y1={237} y2={289} c="#e83ad0" dot={263} />
    <Stripe x={574} y1={237} y2={289} c="#7fff00" dot={263} />
    <g clipPath="url(#lbl)">
      <text x="456" y="266" fill="#b561b5">Mathematics as a place</text>
      <text x="456" y="282" fill="#e83ad0">Choosing Mathematics</text>
    </g>
    <text x="533" y="299" textAnchor="end" fill="#8cf52a">GREEN</text>
    <Stripe x={564} y1={349} y2={403} c="#3f78ad" dot={376} />
    <Stripe x={574} y1={349} y2={364} c="#7fff00" dot={356} />
    <Stripe x={574} y1={388} y2={421} c="#f5e71e" dot={404} />
    <text x="553" y="359" textAnchor="end" fill="#8cf52a">GREEN</text>
    <text x="553" y="379" textAnchor="end" fill="#3f78ad">..Gender make-up</text>
    <text x="553" y="407" textAnchor="end" fill="#d8ce2a">YELLOW</text>
    <Stripe x={564} y1={538} y2={704} c="#38c8d8" dot={621} />
    <Stripe x={574} y1={538} y2={628} c="#7fff00" dot={583} />
    <Stripe x={574} y1={689} y2={780} c="#9c4d23" dot={734} />
    <text x="553" y="586" textAnchor="end" fill="#8cf52a">GREEN</text>
    <text x="553" y="624" textAnchor="end" fill="#38c8d8">..parental advices</text>
    <text x="563" y="737" textAnchor="end" fill="#a2592c">Contradiction</text>
  </StripeCanvas>
);

/* ---------- data ---------- */
const G1 = '#71c572', G2 = '#6ee28a', B = '#4f82b6', GR = '#a39a9e', P = '#a366b8', Y = '#fdf704', C = '#3ccfdc', BR = '#a46a3e';
type S = [string, string?, boolean?];
const LINES: S[][] = [
  [['scared to do so.', G1], [" They're because they're more I don't know they're less forceful, less pushy. And then these", B, true]],
  [["guys feel super isolated. I've had more guys and girls Tell me kind of like, I don't hang out with anyone like", B, true]],
  [["I'm on my own, and it feels awful. And it can do homework with anyone and a lot of them are confused.", B], [' So I', GR, true]],
  [["think people in general drop out because the environment is not that welcoming. And it's a hard, it's just a", GR, true]],
  [['hard career', GR], ['.', P]],
  [[' Weverton: And do you think that this gender makeup of the department is typical or a typical across other']],
  [['departments of mathematics?']],
  [[' ']],
  [['Weverton: '], ["I think it's very atypical. ", B], ["I mean, there's a lot more women here", G1], [', then I think in like the majority of', B, true]],
  [["math departments, that's just my perception, just because I've heard and I've read stats, and I've always", B, true]],
  [["thought, you know, no, in my department, it's really not like that", B], [". And I do think it's because a lot of "], ['I mean,', Y, true]],
  [['this department is it does not foster hardcore competition among the kids from my from the beginning', Y], ['. And']],
  [["that's in that sentence, completely different from a lot of other departments."]],
  [[' Weverton: Can you tell me more about it?']],
  [[' ']],
  [['Jennifer: So, I mean, my parents when they went to grad school, you know, they did not go to mathematics,']],
  [["which is more competitive, you know, the, in general, the other departments, they were to, you know, it's"]],
  [['etmology where they go into the field together, they have more opportunities to be friends and interact,']],
  [["because you're stuck in the wilderness for a week, or something. T"], ['hey just told me, be careful, look out', G2, true]],
  [["because nobody is going to help you, and everyone's out to get you. And you know, if you fall down, that's a", G2, true]],
  [["great opportunity for everyone else to get ahead. And they were like, I'm going to try to screw you over and", G2, true]],
  [['the chance to again, I mean, my parents had people like, check out all the books have a specific topic from', G2, true]],
  [['the library, when they had to do homework on it, or something.', G2], [' And try to trip, like just kind of ruined the', C, true]],
  [['other kids, because in the past, there was no internet, right? And I just remember being really scared. Kind of', C, true]],
  [["like, they were like, oh, if you think they will help you in the home, and your homework, you've gotta run to", C, true]],
  [["like here, Kathy, you're on your own, because that was their experience. very competitive kind of aggressive", C, true]],
  [['cohort that did not collaborate at all.', C], [' '], ['So everyone was on the road and I had a completely different', BR, true]],
  [["experience I think because math is hard everyone panics and everyone was like if I don't grab on to the", BR, true]],
  [["person next to me and study I'm going to die and everyone else was gonna die as well. So I think that fear", BR, true]],
  [["kind of worked you know in the right way for us and also they don't make us they don't make us go they", BR, true]],
  [["don't pit us against each other.", BR], [" They don't pass against each other you don't have professors being you"]],
];

const BL = '#2a6cb0', GY = '#a29da0', OR = '#f08a1d';
type Code = [number, boolean, string, string, number, boolean?];
const CODES: Code[] = [
  [2, true, BL, 'College as All Boys School', 1],
  [3, false, BL, 'PhD Math Program as All Boys School', 5],
  [2, false, BL, 'Universities as Gender Neutral Spaces', 1],
  [2, true, BL, 'Negative Experiences Talking Gender', 8],
  [3, false, BL, 'Developing a thick skin because of gender', 3],
  [3, false, BL, 'Gender Inequality in the PhD Program', 4],
  [2, false, BL, 'Gender Understanding', 4, true],
  [1, false, '#b5aa23', 'Mathematical Confidence in Grad School', 3],
  [1, false, '#85b52c', 'Mathematics as a place for judgment', 1],
  [1, false, '#b85a1d', 'Mathematics as a competitive space', 4],
  [1, true, GY, 'Mathematics Experiences in College', 0],
  [2, false, GY, 'Highly individual research program', 1],
  [2, false, GY, 'Math Confidence', 3],
  [2, false, '#a5a8ab', 'Negative Experiences', 5],
  [2, true, '#a5a8ab', 'Positive Experience', 5],
  [3, false, '#6f9fbc', 'Professor Influence', 2],
  [1, false, '#a83a1c', 'Mathematics as a competitive place', 1],
  [1, true, OR, 'High School Math Experiences', 0],
  [2, false, OR, 'Positive Experiences in High School', 2],
  [2, false, '#a8601c', 'Math Confidence', 3],
  [2, false, '#f7a45a', 'Negative experience with mathematics', 5, true],
  [1, true, '#6f9fbc', 'Home Experiences Related to Mathematics', 1],
  [2, false, '#34c3d8', 'Proud parents', 1],
  [2, false, '#34c3d8', 'parental advices', 1],
  [2, false, '#2a9bab', 'Parental support', 2],
];

const TABS = ['Home', 'Import', 'Codes', 'Variables', 'Analysis', 'Mixed Methods', 'Visual Tools', 'Reports', 'Stats', 'MAXDictio'];

const PanelTools = ({ gap }: { gap: number }) => (
  <>
    <Search ml={gap} />
    <Windows ml={20} />
    <Collapse ml={10} />
    <Close ml={10} />
  </>
);

export default function App() {
  return (
    <Page>
      <Global />
      <TabBar>
        {TABS.map((t, i) => <Tab key={t} $active={i === 0}>{t}</Tab>)}
        <TabRight>
          <UndoIcon />
          <RedoIcon ml={18} />
          <ChevronIcon ml={49} />
          <GearIcon ml={18} />
          <FaceIcon ml={17} />
          <HelpIcon ml={16} />
        </TabRight>
      </TabBar>

      <Ribbon>
        <RibbonButton $w={58} $ml={13}><RibbonIcon><NewProject /></RibbonIcon>New<br />Project</RibbonButton>
        <RibbonButton $w={58}><RibbonIcon><OpenProject /></RibbonIcon>Open<br /><span>Project<Caret /></span></RibbonButton>
        <Separator $ml={14} />
        <ActiveGroup>
          <RibbonButton $w={65} $top={9}><RibbonIcon><DocSystemBig /></RibbonIcon>Document<br />System</RibbonButton>
          <RibbonButton $w={65} $top={9}><RibbonIcon><CodeSystemBig /></RibbonIcon>Code<br />System</RibbonButton>
          <RibbonButton $w={65} $top={9}><RibbonIcon><DocBrowserBig /></RibbonIcon>Document<br />Browser</RibbonButton>
        </ActiveGroup>
        <RibbonButton $w={76}><RibbonIcon><RetrievedBig /></RibbonIcon>Retrieved<br />Segments</RibbonButton>
        <LayoutGrid><Layout1 /><Layout2 /><Layout3 /><Layout4 /></LayoutGrid>
        <Separator $ml={21} />
        <RibbonButton $w={84} $top={12} $ih={41}><RibbonIcon><Logbook /></RibbonIcon>Logbook</RibbonButton>
        <Separator />
        <RibbonButton $w={91}><RibbonIcon><Teamwork /></RibbonIcon>Teamwork<CaretLine><Caret /></CaretLine></RibbonButton>
        <Separator />
        <ListColumn $w={215} $ml={14}>
          <ListItem><SaveAs />Save Project As</ListItem>
          <ListItem><Anonym />Save Anonymized Project As</ListItem>
          <ListItem $off><FromDocs />Project from Activated Documents</ListItem>
        </ListColumn>
        <ListColumn $w={152}>
          <ListItem><Merge />Merge Projects</ListItem>
          <ListItem><OpenExch />Open Exchange File</ListItem>
          <ListItem><ExportExch />Export Exchange File</ListItem>
        </ListColumn>
        <Separator />
        <RibbonButton $w={74}><RibbonIcon><ExternalFiles /></RibbonIcon>External<br /><span>Files<Caret /></span></RibbonButton>
        <Separator />
      </Ribbon>

      <Workspace>
        <LeftColumn>
          <Panel $h={157}>
            <PanelHeader $h={31} $pb={1}>
              <DocSmall ml={7} />
              <PanelTitle $ml={5} $w={158}>Document System</PanelTitle>
              <PasteRed />
              <CopyDocs ml={7} />
              <FilterDoc ml={9} />
              <ImportGreen ml={18} />
              <NewDoc ml={9} />
              <NewFolder ml={7} />
              <PanelTools gap={15} />
            </PanelHeader>
            <SubHeader>
              <SubCell $w={18}><TreeMini /></SubCell>
              <SubCell $w={348} />
              <SubCell $w={20} $line><NoteMini /></SubCell>
              <SubCell $w={61} $line>#</SubCell>
            </SubHeader>
            <TreeList>
              <Row><Indent $lvl={0}><Arrow /></Indent><RowBody><Dot /><FolderTree ml={2} /><RowLabel $bold>Documents</RowLabel><NoteCell /><Count $bold>663</Count></RowBody></Row>
              <Row><Indent $lvl={1}><Arrow /></Indent><RowBody><Dot /><FolderTree ml={2} /><RowLabel>Day 2</RowLabel><NoteCell /><Count>374</Count></RowBody></Row>
              <Row><Indent $lvl={2} /><RowBody $stripe><Dot /><MediaDoc /><RowLabel>190920_Heather</RowLabel><NoteCell /><Count>25</Count></RowBody></Row>
              <Row><Indent $lvl={2} /><RowBody $sel><Dot /><MediaDoc edit /><RowLabel>190920_Jennifer</RowLabel><NoteCell /><Count>169</Count></RowBody></Row>
              <Row><Indent $lvl={2} /><RowBody $stripe><Dot /><MediaDoc /><RowLabel>190920_Kate</RowLabel><NoteCell /><Count>14</Count></RowBody></Row>
              <Row><Indent $lvl={2} /><RowBody><Dot /><MediaDoc /><RowLabel>190920_Kelley</RowLabel><NoteCell /><Count>120</Count></RowBody></Row>
              <Row><Indent $lvl={2} /><RowBody $stripe><Dot /><MediaDoc /></RowBody></Row>
            </TreeList>
          </Panel>
          <Panel>
            <PanelHeader $h={32}>
              <CodeSmall ml={6} />
              <PanelTitle $ml={5} $w={188}>Code System</PanelTitle>
              <CodeSys2 />
              <Smiley ml={18} />
              <TableBlue ml={9} />
              <CodePlus ml={20} />
              <PanelTools gap={18} />
            </PanelHeader>
            <SubHeader>
              <SubCell $w={18}><TreeMini /></SubCell>
              <SubCell $w={348} />
              <SubCell $w={20} $line><NoteMini /></SubCell>
              <SubCell $w={61} $line><CodeMini /></SubCell>
            </SubHeader>
            <TreeList>
              {CODES.map(([lvl, arrow, col, label, n, note], i) => (
                <Row key={i}>
                  <Indent $lvl={lvl}>{arrow && <Arrow />}</Indent>
                  <RowBody>
                    <Dot /><CodeTag c={col} /><RowLabel>{label}</RowLabel>
                    <NoteCell>{note && <StickyNote />}</NoteCell>
                    <Count>{n}</Count>
                  </RowBody>
                </Row>
              ))}
              <Row><Indent $lvl={1} /><RowBody><Dot /><CodeTag c={GY} /></RowBody></Row>
            </TreeList>
          </Panel>
        </LeftColumn>

        <RightColumn>
          <PanelHeader $h={27} $pb={4}>
            <BrowserTitleIcon ml={8} />
            <PanelTitle $ml={6} $w={573}>Document Browser: 190920_Jennifer</PanelTitle>
            <Music />
            <Sync ml={18} />
            <TableClock ml={10} />
            <ZoomOut ml={25} />
            <ZoomIn ml={7} />
            <Hundred ml={7} />
            <PencilBlue ml={20} />
            <Printer ml={18} />
            <ExportDoc ml={7} />
            <Search ml={17} />
            <Windows ml={19} />
            <Collapse ml={10} />
            <Close ml={10} />
          </PanelHeader>
          <BrowserTools>
            <ComboBox><Updown /></ComboBox>
            <CodePink ml={12} />
            <CodeRedPlus ml={15} />
            <CodeDblPlus ml={10} />
            <MarkRed ml={22} />
            <MarkBlue ml={11} />
            <MarkGreen ml={11} />
            <MarkYellow ml={11} />
            <MarkPurple ml={12} />
            <Smiley ml={21} />
            <CodeCycle ml={26} />
            <LinkPlus ml={24} />
            <LinkX ml={11} />
          </BrowserTools>
          <StripeHeader>
            <StripeHeadCell $w={132}><CodeMini /></StripeHeadCell>
            <StripeHeadCell $w={100} $line><NoteMini /></StripeHeadCell>
          </StripeHeader>
          <BrowserBody>
            <StripeColumn><Stripes /></StripeColumn>
            <ParaColumn>
              <ParaCell $h={92} $on />
              <ParaCell $h={47} $on>75</ParaCell>
              <ParaCell $h={10} />
              <ParaCell $h={91} $on>76</ParaCell>
              <ParaCell $h={2} />
              <ParaCell $h={17} $on>77</ParaCell>
              <ParaCell $h={20} />
              <ParaCell $h={310} $on>78</ParaCell>
            </ParaColumn>
            <TimeColumn>
              <ClockSlot $gap={93}><Clock /></ClockSlot>
              <ClockSlot $gap={40}><Clock /></ClockSlot>
              <ClockSlot $gap={78}><Clock /></ClockSlot>
              <ClockSlot $gap={155}><Clock /></ClockSlot>
            </TimeColumn>
            <TextColumn>
              {LINES.map((segs, i) => (
                <TextLine key={i}>
                  {segs.map(([t, bg, fill], j) => <Seg key={j} $bg={bg} $fill={fill}>{t}</Seg>)}
                </TextLine>
              ))}
            </TextColumn>
          </BrowserBody>
        </RightColumn>
      </Workspace>

      <StatusBar>
        <StDoc ml={16} /><StatusCount $w={70}>0</StatusCount>
        <StTag /><StatusCount $w={70}>0</StatusCount>
        <StCodes /><StatusCount $w={68}>0</StatusCount>
        <StCodeDoc /><StatusCount $w={70}>0</StatusCount>
        <StPersonDoc /><StPersonDoc2 ml={70} /><StDocDown ml={69} />
        <StQuery ml={70} />
        <QueryLabel>Simple Coding Query (OR combination of codes)</QueryLabel>
      </StatusBar>
    </Page>
  );
}
